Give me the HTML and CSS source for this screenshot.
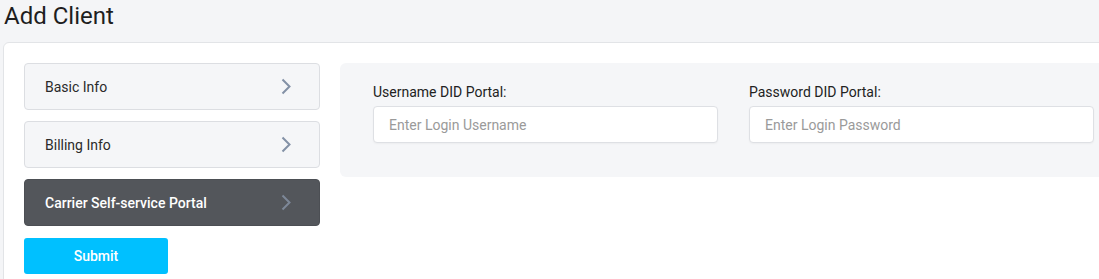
FILE: index.html
```html
<!DOCTYPE html>
<html lang="en">
<head>
    <meta charset="UTF-8">
    <meta name="viewport" content="width=device-width, initial-scale=1.0">
    <title>Add Client</title>
    <link rel="stylesheet" href="styles.css">
</head>
<body>
    <h1 class="page-title">Add Client</h1>
    <div class="card">
        <div class="steps">
            <div class="step">
                <span>Basic Info</span>
                <svg class="chevron" width="11" height="17" viewBox="0 0 11 17"><path d="M1.5 1.5 L8.5 8.5 L1.5 15.5" fill="none" stroke="currentColor" stroke-width="2"/></svg>
            </div>
            <div class="step">
                <span>Billing Info</span>
                <svg class="chevron" width="11" height="17" viewBox="0 0 11 17"><path d="M1.5 1.5 L8.5 8.5 L1.5 15.5" fill="none" stroke="currentColor" stroke-width="2"/></svg>
            </div>
            <div class="step active">
                <span>Carrier Self-service Portal</span>
                <svg class="chevron" width="11" height="17" viewBox="0 0 11 17"><path d="M1.5 1.5 L8.5 8.5 L1.5 15.5" fill="none" stroke="currentColor" stroke-width="2"/></svg>
            </div>
            <button class="submit">Submit</button>
        </div>
        <div class="panel">
            <div class="field">
                <label for="username">Username DID Portal:</label>
                <input type="text" id="username" placeholder="Enter Login Username">
            </div>
            <div class="field">
                <label for="password">Password DID Portal:</label>
                <input type="password" id="password" placeholder="Enter Login Password">
            </div>
        </div>
    </div>
</body>
</html>
```

FILE: styles.css
```css
body {
    margin: 0;
    padding: 0;
    background: #f4f5f7;
    font-family: Roboto, "Liberation Sans", Arial, sans-serif;
    color: #222;
    overflow: hidden;
}
.page-title {
    margin: 2px 0 0 4px;
    font-size: 24px;
    font-weight: 400;
    line-height: 28px;
    color: #1e1e1e;
}
.card {
    margin: 12px 0 0 3px;
    width: 1145px;
    box-sizing: border-box;
    background: #fff;
    border: 1px solid #e2e4e7;
    border-radius: 6px;
    padding: 20px;
    display: flex;
    gap: 20px;
    align-items: flex-start;
    height: 250px;
}
.steps {
    width: 296px;
    flex-shrink: 0;
}
.step {
    height: 47px;
    box-sizing: border-box;
    display: flex;
    align-items: center;
    justify-content: space-between;
    padding: 0 27px 0 20px;
    background: #f5f6f8;
    border: 1px solid #dcdee2;
    border-radius: 4px;
    font-size: 14px;
    color: #2a2a2a;
    margin-bottom: 11px;
}
.step .chevron {
    color: #8391a6;
}
.step.active {
    background: #53565b;
    border-color: #4c4f54;
    color: #fff;
    font-weight: 500;
}
.step.active .chevron {
    color: #7d8898;
}
.submit {
    display: block;
    width: 144px;
    height: 36px;
    margin-top: 12px;
    border: none;
    border-radius: 3px;
    background: #00c0ff;
    color: #fff;
    font-family: inherit;
    font-size: 14px;
    font-weight: 500;
}
.panel {
    flex: 1;
    display: grid;
    grid-template-columns: 345px 345px;
    column-gap: 31px;
    background: #f5f6f8;
    border-radius: 6px;
    padding: 21px 33px 34px;
}
.field label {
    display: block;
    font-size: 14px;
    line-height: 16px;
    margin-bottom: 6px;
    color: #222;
}
.field input {
    width: 100%;
    height: 37px;
    box-sizing: border-box;
    border: 1px solid #dee0e4;
    border-radius: 4px;
    background: #fff;
    padding: 0 15px;
    font-family: inherit;
    font-size: 14px;
    box-shadow: 0 1px 2px rgba(0, 0, 0, 0.04);
}
.field input::placeholder {
    color: #9a9a9a;
}
```
